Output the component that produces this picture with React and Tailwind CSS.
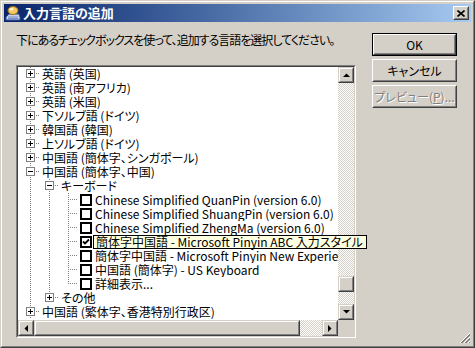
import React from "react";

const rows = [
  { cols: ["T"], box: "plus", text: "英語 (英国)" },
  { cols: ["T"], box: "plus", text: "英語 (南アフリカ)" },
  { cols: ["T"], box: "plus", text: "英語 (米国)" },
  { cols: ["T"], box: "plus", text: "下ソルブ語 (ドイツ)" },
  { cols: ["T"], box: "plus", text: "韓国語 (韓国)" },
  { cols: ["T"], box: "plus", text: "上ソルブ語 (ドイツ)" },
  { cols: ["T"], box: "plus", text: "中国語 (簡体字、シンガポール)" },
  { cols: ["T"], box: "minus", text: "中国語 (簡体字、中国)" },
  { cols: ["I", "T"], box: "minus", text: "キーボード" },
  { cols: ["I", "I", "T"], check: false, text: "Chinese Simplified QuanPin (version 6.0)" },
  { cols: ["I", "I", "T"], check: false, text: "Chinese Simplified ShuangPin (version 6.0)" },
  { cols: ["I", "I", "T"], check: false, text: "Chinese Simplified ZhengMa (version 6.0)" },
  { cols: ["I", "I", "T"], check: true, tip: true, text: "簡体字中国語 - Microsoft Pinyin ABC 入力スタイル" },
  { cols: ["I", "I", "T"], check: false, text: "簡体字中国語 - Microsoft Pinyin New Experience 入力スタイル" },
  { cols: ["I", "I", "T"], check: false, text: "中国語 (簡体字) - US Keyboard" },
  { cols: ["I", "I", "L"], check: false, text: "詳細表示..." },
  { cols: ["I", "L"], box: "plus", text: "その他" },
  { cols: ["T"], box: "plus", text: "中国語 (繁体字、香港特別行政区)" },
];

// one 19px indent column of the tree: dotted lines plus the +/- box
const Connector = ({ kind, box }) => {
  const dots = { stroke: "#808080", strokeDasharray: "1 1", shapeRendering: "crispEdges" };
  return (
    <svg width="19" height="14" className="block shrink-0">
      {(kind === "I" || kind === "T") && <line x1="9.5" y1="0" x2="9.5" y2="14" {...dots} />}
      {kind === "L" && <line x1="9.5" y1="0" x2="9.5" y2="7" {...dots} />}
      {(kind === "T" || kind === "L") && <line x1="11" y1="6.5" x2="19" y2="6.5" {...dots} />}
      {box && (
        <g shapeRendering="crispEdges">
          <rect x="5.5" y="2.5" width="8" height="8" fill="#fff" stroke="#808080" />
          <line x1="7" y1="6.5" x2="12" y2="6.5" stroke="#000" />
          {box === "plus" && <line x1="9.5" y1="4" x2="9.5" y2="9" stroke="#000" />}
        </g>
      )}
    </svg>
  );
};

const CheckBox = ({ checked }) => (
  <svg width="12" height="12" className="block shrink-0 ml-[2px]">
    <rect x="1" y="1" width="10" height="10" fill="#fff" stroke="#000" strokeWidth="2" shapeRendering="crispEdges" />
    {checked && <path d="M3 5.5 L5 7.5 L9 3.5" fill="none" stroke="#000" strokeWidth="1.8" />}
  </svg>
);

const Arrow = ({ dir }) => {
  const d = {
    up: "M0 4 L3.5 0.5 L7 4 Z",
    down: "M0 0 L3.5 3.5 L7 0 Z",
    left: "M4 0 L0.5 3.5 L4 7 Z",
    right: "M0 0 L3.5 3.5 L0 7 Z",
  }[dir];
  const vertical = dir === "up" || dir === "down";
  return (
    <svg width={vertical ? 7 : 4} height={vertical ? 4 : 7}>
      <path d={d} fill="#000" />
    </svg>
  );
};

// raised scrollbar piece (button / thumb)
const Raised = ({ className = "", children }) => (
  <div className={`border border-t-[#d4d0c8] border-l-[#d4d0c8] border-r-[#404040] border-b-[#404040] ${className}`}>
    <div className="w-full h-full border border-t-white border-l-white border-r-[#808080] border-b-[#808080] bg-[#d4d0c8] flex items-center justify-center">
      {children}
    </div>
  </div>
);

const track = "[background-image:repeating-conic-gradient(#d4d0c8_0%_25%,#ffffff_0%_50%)] [background-size:2px_2px]";

const PushButton = ({ children, isDefault, disabled }) => (
  <div className={`w-[85px] h-[23px] ${isDefault ? "border border-black" : ""}`}>
    <div className="w-full h-full border border-t-white border-l-white border-r-[#404040] border-b-[#404040]">
      <div className={`w-full h-full whitespace-nowrap border border-t-[#d4d0c8] border-l-[#d4d0c8] border-r-[#808080] border-b-[#808080] flex items-center justify-center ${disabled ? "text-[#808080] [text-shadow:1px_1px_0_#fff]" : "text-black"}`}>
        {children}
      </div>
    </div>
  </div>
);

const TreeRow = ({ row }) => {
  const level = row.cols.length - 1;
  return (
    <div className={`flex items-center h-[14px] w-[320px] pl-[3px] whitespace-nowrap ${row.tip ? "overflow-visible" : "overflow-hidden"}`}>
      {row.cols.map((c, i) => (
        <Connector key={i} kind={c} box={i === level ? row.box : null} />
      ))}
      {row.check !== undefined && <CheckBox checked={row.check} />}
      {row.tip ? (
        <span className="relative z-10 ml-[1px] h-[14px] leading-[12px] border border-black bg-[#ffffe1] pl-[2px] pr-[3px]">
          {row.text}
        </span>
      ) : (
        <span className={`leading-[14px] ${row.check !== undefined ? "pl-[3px]" : "pl-[2px]"}`}>{row.text}</span>
      )}
    </div>
  );
};

export default function App() {
  return (
    <div className="w-[475px] h-[348px] font-['Noto_Sans_CJK_JP',sans-serif] text-[12px] leading-[14px] text-black [font-feature-settings:'palt'] border border-t-[#d4d0c8] border-l-[#d4d0c8] border-r-[#404040] border-b-[#404040]">
      <div className="w-full h-full border border-t-white border-l-white border-r-[#808080] border-b-[#808080] bg-[#d4d0c8] p-[2px] flex flex-col">
        {/* title bar */}
        <div className="h-[18px] flex items-center bg-linear-to-r from-[#0a246a] to-[#a6caf0]">
          <svg width="16" height="16" className="ml-[1px] shrink-0">
            <path d="M1 12 L4 9 L14 9 L15 12 L15 15 L1 15 Z" fill="#c8d0e8" stroke="#3050a0" />
            <path d="M3 12 H13 M3 13.5 H13" stroke="#6080c0" strokeWidth="0.8" />
            <ellipse cx="8" cy="5.5" rx="5" ry="4" fill="#f4c860" stroke="#a07020" />
            <ellipse cx="6.5" cy="4.2" rx="2" ry="1.2" fill="#fff6d0" />
          </svg>
          <span className="ml-[2px] text-white font-bold text-[13px] leading-[16px]">入力言語の追加</span>
          <div className="ml-auto mr-[2px] w-[16px] h-[14px] border border-t-white border-l-white border-r-[#404040] border-b-[#404040]">
            <div className="w-full h-full border border-t-[#d4d0c8] border-l-[#d4d0c8] border-r-[#808080] border-b-[#808080] bg-[#d4d0c8] flex items-center justify-center">
              <svg width="8" height="7">
                <path d="M0.5 0.5 L7.5 6.5 M7.5 0.5 L0.5 6.5" stroke="#000" strokeWidth="1.6" />
              </svg>
            </div>
          </div>
        </div>

        {/* body */}
        <div className="relative flex-1 flex pt-[11px] pl-[12px]">
          <div className="w-[340px] flex flex-col">
            <p className="whitespace-nowrap tracking-[-1px]">
              下にあるチェックボックスを使って、追加する言語を選択してください。
            </p>
            <div className="mt-[18px] h-[273px] border border-t-[#808080] border-l-[#808080] border-r-white border-b-white">
              <div className="w-full h-full border border-t-[#404040] border-l-[#404040] border-r-[#d4d0c8] border-b-[#d4d0c8] bg-white flex flex-col">
                <div className="flex flex-1 min-h-0">
                  <div className="w-[320px]">
                    {rows.map((r, i) => (
                      <TreeRow key={i} row={r} />
                    ))}
                  </div>
                  <div className="w-[16px] flex flex-col">
                    <Raised className="h-[16px]">
                      <Arrow dir="up" />
                    </Raised>
                    <div className={`h-[193px] ${track}`} />
                    <Raised className="h-[16px]" />
                    <div className={`flex-1 ${track}`} />
                    <Raised className="h-[16px]">
                      <Arrow dir="down" />
                    </Raised>
                  </div>
                </div>
                <div className="flex h-[16px]">
                  <Raised className="w-[16px]">
                    <Arrow dir="left" />
                  </Raised>
                  <Raised className="w-[266px]" />
                  <div className={`flex-1 ${track}`} />
                  <Raised className="w-[16px]">
                    <Arrow dir="right" />
                  </Raised>
                  <div className="w-[16px] bg-[#d4d0c8]" />
                </div>
              </div>
            </div>
          </div>

          <div className="ml-[16px] flex flex-col gap-[3px]">
            <PushButton isDefault>OK</PushButton>
            <PushButton>キャンセル</PushButton>
            <PushButton disabled>
              <span>
                プレビュー(<span className="underline">P</span>)...
              </span>
            </PushButton>
          </div>

          {/* size grip */}
          <svg width="12" height="12" className="absolute right-0 bottom-0">
            <path d="M11 1 L1 11 M11 5 L5 11 M11 9 L9 11" stroke="#fff" />
            <path d="M11 2 L2 11 M11 3 L3 11 M11 6 L6 11 M11 7 L7 11 M11 10 L10 11" stroke="#808080" />
          </svg>
        </div>
      </div>
    </div>
  );
}
